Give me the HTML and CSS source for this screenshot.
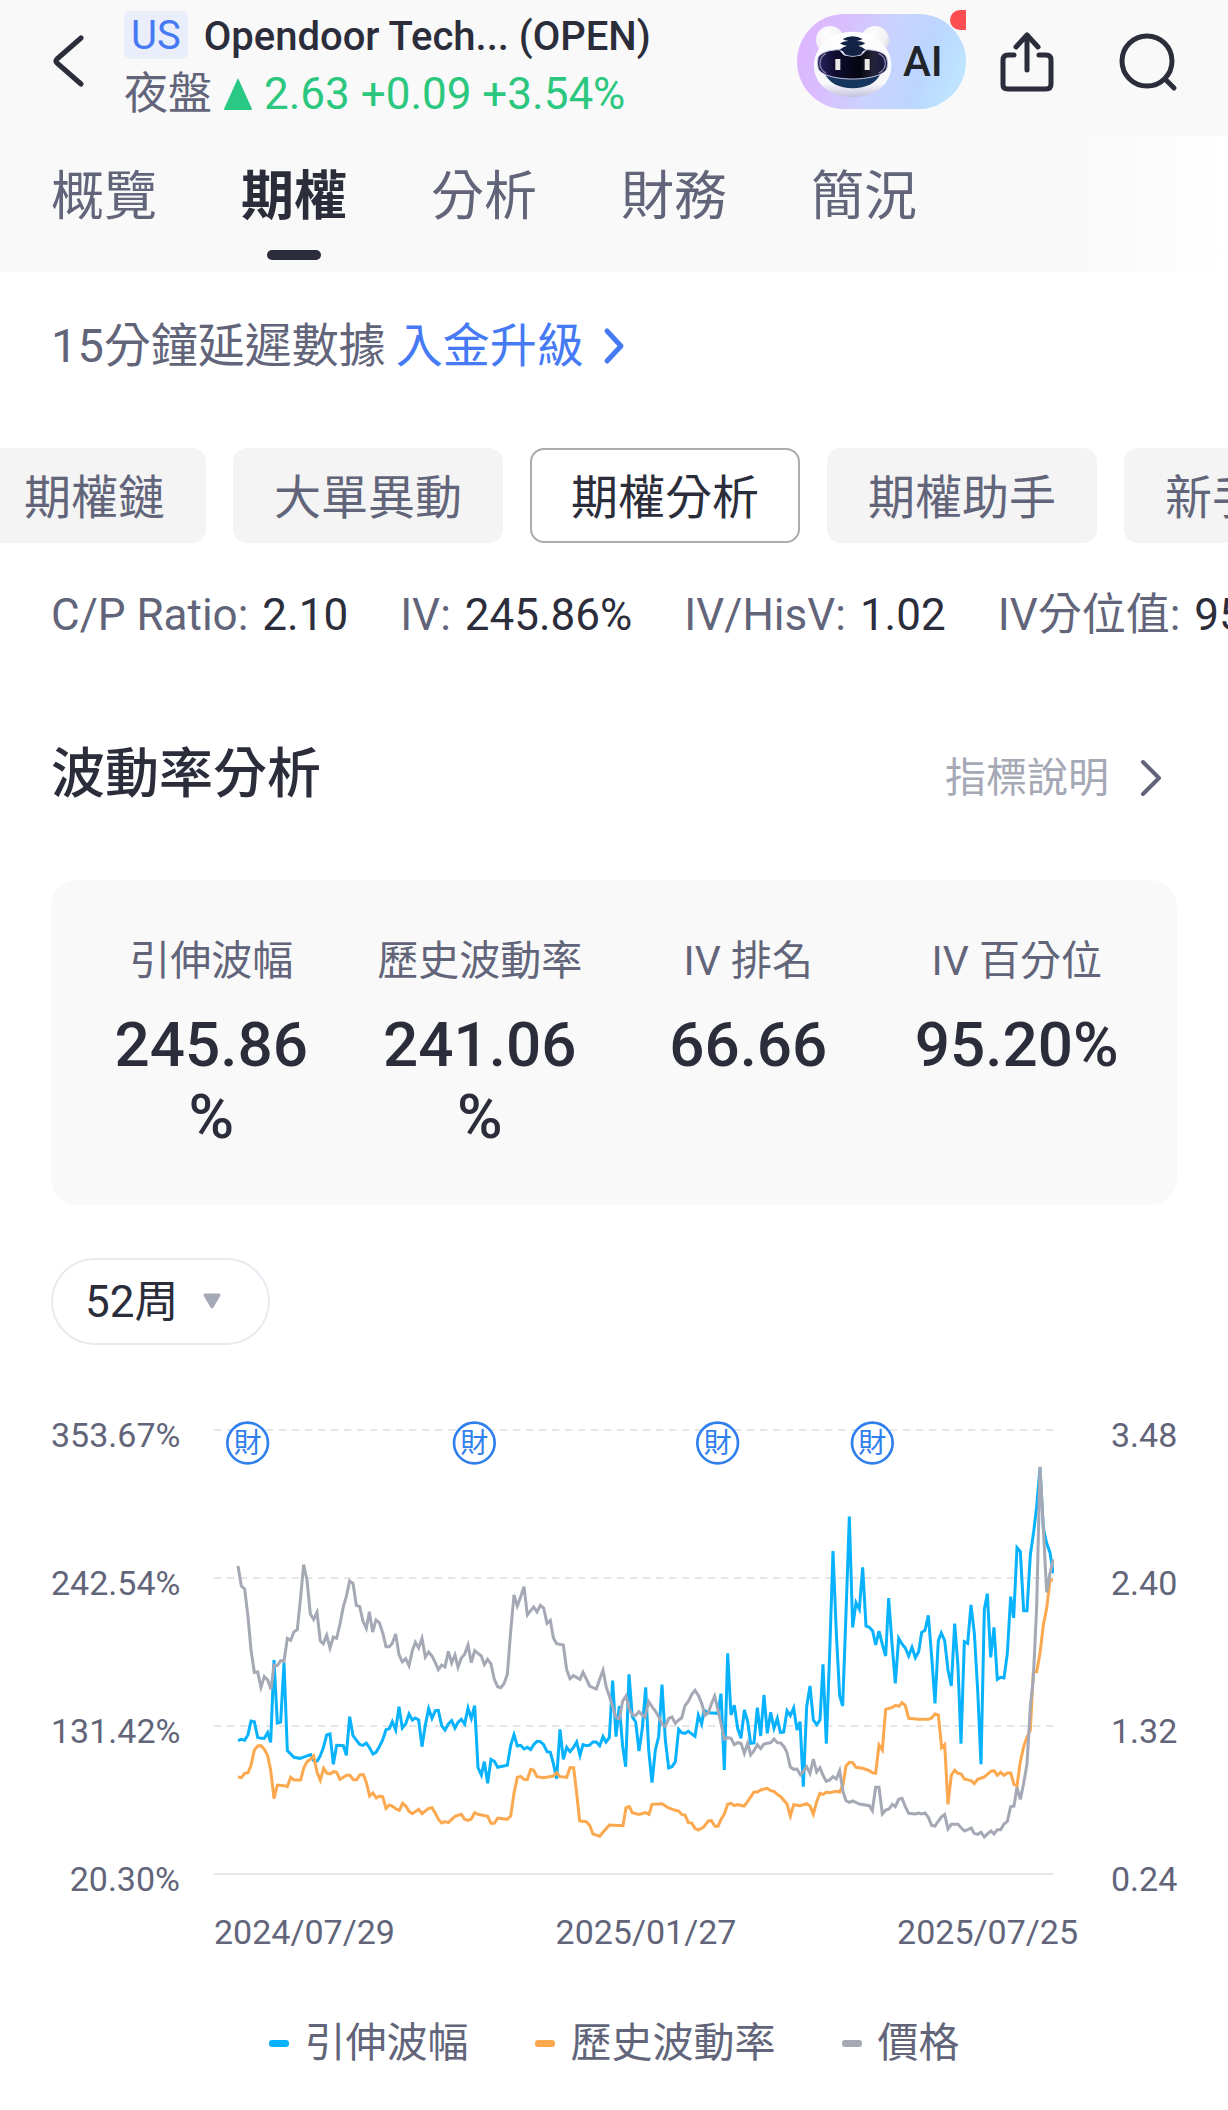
FILE: index.html
```html
<!DOCTYPE html>
<html lang="zh-Hant">
<head>
<meta charset="utf-8">
<meta name="viewport" content="width=device-width, initial-scale=1">
<title>Opendoor Tech (OPEN) 期權分析</title>
<link rel="stylesheet" href="styles.css">
</head>
<body>
<header class="top">
  <div class="bar">
    <button class="icon-btn back" type="button" aria-label="返回">
      <svg width="32" height="52" viewBox="0 0 32 52"><path d="M29 3 5 24Q3 26 5 28L29 49"/></svg>
    </button>
    <div class="quote">
      <div class="quote-name"><span class="market">US</span><h1 class="name">Opendoor Tech... (OPEN)</h1></div>
      <div class="quote-price"><span>夜盤</span>
        <svg class="up" width="28" height="33" viewBox="0 0 28 33" aria-hidden="true"><path d="M14 0 28 31Q28 32 27 32H1Q0 32 0 31Z"/></svg>
        <span class="gain">2.63 +0.09 +3.54%</span></div>
    </div>
    <div class="actions">
      <button class="ai" type="button">
        <svg width="84" height="75" viewBox="148 75 252 225" aria-hidden="true">
          <defs>
            <radialGradient id="ear" cx=".4" cy=".3" r=".8"><stop offset="0" stop-color="#fff"/><stop offset=".6" stop-color="#f3f2f4"/><stop offset="1" stop-color="#d5d3dc"/></radialGradient>
            <linearGradient id="head" x1="0" y1="0" x2="0" y2="1"><stop offset="0" stop-color="#fff"/><stop offset=".8" stop-color="#f7f6fb"/><stop offset="1" stop-color="#c3c2dc"/></linearGradient>
            <linearGradient id="visor" x1="0" y1="0" x2="1" y2="0"><stop offset="0" stop-color="#2a2461"/><stop offset=".25" stop-color="#0f0c30"/><stop offset=".6" stop-color="#050510"/><stop offset=".8" stop-color="#26243a"/><stop offset="1" stop-color="#15123e"/></linearGradient>
          </defs>
          <circle cx="208" cy="123" r="42" fill="url(#ear)"/>
          <circle cx="343" cy="123" r="42" fill="url(#ear)"/>
          <path d="M276 98C345 98 392 145 392 200C392 258 338 294 276 294C212 294 160 258 160 200C160 145 207 98 276 98Z" fill="url(#head)"/>
          <path d="M192 222H360C350 252 315 268 276 268C237 268 203 252 192 222Z" fill="#17365d"/>
          <path d="M172 176C180 160 205 153 236 152L250 168Q276 176 302 168L318 152C348 153 372 160 378 176Q384 195 378 210C368 230 320 240 276 240C230 240 183 230 173 210Q168 195 172 176Z" fill="url(#visor)" stroke="#c8c4e4" stroke-width="3"/>
          <path d="M196 164Q178 172 178 194Q178 212 196 222M354 164Q374 172 374 194Q374 212 354 222" fill="none" stroke="#8583aa" stroke-width="4"/>
          <path d="M276 112Q292 113 306 120Q298 125 288 126Q302 126 314 133Q304 141 292 140Q304 142 316 153Q304 155 302 166Q276 176 252 166Q250 155 236 153Q248 142 260 140Q248 141 238 133Q250 126 264 126Q252 125 246 120Q260 113 276 112Z" fill="#122244"/>
          <path d="M224 180H239V213H224ZM312 180H327V213H312Z" fill="#e9e9e6"/>
        </svg>
        <span>AI</span>
        <i class="dot"></i>
      </button>
      <button class="icon-btn share" type="button" aria-label="分享">
        <svg width="56" height="64" viewBox="0 0 56 64"><path d="M15 25H9Q4 25 4 30V55Q4 59 9 59H47Q52 59 52 54V30Q52 25 47 25H40M28 40V6M17 17 28 5 39 17"/></svg>
      </button>
      <button class="icon-btn search" type="button" aria-label="搜尋">
        <svg width="60" height="60" viewBox="0 0 60 60"><circle cx="28" cy="29" r="25"/><path d="M46 47 55 56"/></svg>
      </button>
    </div>
  </div>
  <nav class="tabs">
    <a class="tab" href="#overview">概覽</a>
    <a class="tab is-on" href="#options" aria-current="page">期權</a>
    <a class="tab" href="#analysis">分析</a>
    <a class="tab" href="#finance">財務</a>
    <a class="tab" href="#profile">簡況</a>
  </nav>
</header>

<main>
  <p class="notice">15分鐘延遲數據 <a href="#upgrade">入金升級<svg width="24" height="38" viewBox="0 0 24 38" aria-hidden="true"><path d="M4 4 18 19 4 34"/></svg></a></p>

  <div class="chips">
    <button class="chip" type="button">期權鏈</button>
    <button class="chip" type="button">大單異動</button>
    <button class="chip is-on" type="button">期權分析</button>
    <button class="chip" type="button">期權助手</button>
    <button class="chip" type="button">新手教學</button>
  </div>

  <dl class="ratios">
    <div><dt>C/P Ratio:</dt><dd>2.10</dd></div>
    <div><dt>IV:</dt><dd>245.86%</dd></div>
    <div><dt>IV/HisV:</dt><dd>1.02</dd></div>
    <div><dt>IV分位值:</dt><dd>95.20%</dd></div>
  </dl>

  <section class="section">
    <div class="section-head">
      <h2>波動率分析</h2>
      <a class="help" href="#help">指標說明<svg width="24" height="42" viewBox="0 0 24 42" aria-hidden="true"><path d="M4 5 20 21 4 37"/></svg></a>
    </div>

    <dl class="card">
      <div><dt>引伸波幅</dt><dd>245.86%</dd></div>
      <div><dt>歷史波動率</dt><dd>241.06%</dd></div>
      <div><dt>IV 排名</dt><dd>66.66</dd></div>
      <div><dt>IV 百分位</dt><dd>95.20%</dd></div>
    </dl>

    <div class="period">
      <select aria-label="週期"><option>52周</option><option>26周</option></select>
      <svg width="20" height="17" viewBox="0 0 20 17" aria-hidden="true"><path d="M3 2H17L10 14Z"/></svg>
    </div>

    <figure class="chart">
      <div class="axis axis-left"><span>353.67%</span><span>242.54%</span><span>131.42%</span><span>20.30%</span></div>
      <svg class="plot" viewBox="42 45 2520 1452" role="img" aria-label="引伸波幅、歷史波動率與價格走勢">
        <path class="grid-dash" d="M42 90H2559M42 534H2559M42 978H2559"/>
        <path class="grid-base" d="M42 1422H2559"/>
        <polyline class="line iv" points="114,1022 124,1018 134,1021 144,1004 153,963 163,965 173,1012 183,1015 193,1015 203,998 212,1027 222,780 232,969 242,966 252,788 262,1052 282,1072 300,1075 332,1064 341,1082 352,1083 361,1067 370,1043 380,1005 390,1002 400,1093 410,1036 430,1037 439,1066 449,950 459,1007 479,1033 489,1036 499,1029 509,1044 519,1062 528,1057 538,1040 548,1020 558,989 568,986 577,965 587,990 597,920 607,984 617,972 627,942 637,960 646,954 656,960 666,1040 676,975 686,926 696,955 706,932 715,931 725,977 735,990 745,972 755,962 765,984 774,967 784,958 794,972 804,924 814,955 824,917 834,1103 844,1125 853,1085 863,1150 873,1078 883,1084 893,1102 922,1096 932,1037 942,1004 952,1038 962,1036 972,1047 982,1042 992,1049 1001,1034 1011,1024 1021,1025 1031,1034 1041,1055 1051,1057 1060,1090 1070,1136 1080,988 1090,1078 1100,1042 1110,1055 1120,1043 1130,1026 1140,1066 1149,1034 1159,1037 1169,1035 1179,1026 1189,1026 1199,1037 1209,1010 1218,1026 1228,1013 1238,842 1248,1010 1258,918 1268,1040 1277,1100 1287,823 1297,950 1307,966 1317,1053 1327,985 1337,862 1346,1050 1356,1148 1366,1050 1376,1010 1386,854 1396,1020 1406,1104 1416,1100 1426,1085 1436,988 1445,998 1455,1000 1465,994 1485,1009 1495,946 1505,972 1512,930 1525,938 1554,940 1563,881 1573,1110 1583,760 1593,945 1603,916 1613,985 1623,1015 1633,930 1643,965 1652,1030 1662,1029 1672,923 1682,1008 1692,885 1702,1000 1712,937 1722,985 1732,955 1741,997 1751,996 1761,932 1771,947 1781,924 1791,990 1800,965 1810,1160 1820,920 1830,858 1840,960 1850,974 1860,960 1869,793 1879,1031 1889,760 1899,453 1909,700 1919,887 1928,918 1938,640 1948,350 1958,682 1968,608 1978,628 1988,502 1998,678 2008,682 2018,693 2027,735 2037,693 2047,733 2057,768 2066,594 2076,730 2086,850 2096,715 2106,732 2116,744 2126,768 2136,742 2146,773 2156,755 2165,697 2175,691 2185,646 2195,770 2205,910 2215,722 2224,699 2234,722 2244,810 2254,858 2264,671 2274,800 2283,1031 2293,725 2303,730 2313,615 2323,700 2333,870 2343,1093 2353,628 2362,581 2372,772 2382,682 2392,838 2402,832 2412,834 2422,760 2432,590 2441,654 2451,443 2461,455 2471,632 2481,632 2491,465 2501,395 2510,320 2520,205 2530,385 2540,430 2550,458 2560,520"/>
        <polyline class="line hv" points="114,1131 124,1133 134,1120 144,1118 153,1097 163,1050 173,1038 183,1037 193,1048 203,1067 212,1110 222,1196 232,1155 252,1157 262,1160 272,1132 282,1140 302,1140 311,1105 321,1085 331,1078 341,1068 351,1116 361,1141 371,1105 381,1120 391,1122 400,1115 410,1117 420,1138 440,1126 450,1126 460,1139 470,1139 480,1124 490,1124 499,1147 509,1188 519,1179 529,1194 539,1188 548,1190 558,1225 568,1215 578,1219 588,1227 598,1231 608,1210 618,1219 627,1234 637,1241 656,1228 666,1241 686,1225 696,1223 706,1240 716,1259 725,1269 735,1265 745,1268 765,1249 784,1243 794,1258 804,1261 814,1257 824,1238 834,1243 863,1249 873,1270 883,1270 893,1254 922,1258 932,1248 942,1180 952,1132 962,1129 972,1138 982,1139 992,1108 1001,1111 1011,1130 1031,1133 1060,1128 1070,1118 1080,1130 1100,1132 1110,1103 1121,1103 1130,1180 1139,1263 1159,1265 1169,1276 1179,1302 1199,1309 1209,1297 1228,1275 1269,1277 1278,1223 1288,1220 1297,1238 1317,1243 1337,1238 1347,1243 1356,1213 1386,1211 1406,1224 1426,1231 1436,1233 1446,1244 1455,1245 1465,1268 1475,1269 1485,1285 1495,1290 1510,1282 1525,1263 1534,1262 1545,1279 1554,1279 1563,1258 1573,1242 1583,1213 1593,1210 1603,1217 1613,1214 1633,1218 1643,1204 1662,1176 1672,1176 1682,1170 1702,1165 1712,1172 1722,1174 1732,1183 1742,1190 1761,1212 1771,1248 1781,1214 1801,1217 1820,1211 1830,1218 1840,1243 1850,1205 1860,1180 1870,1183 1879,1176 1889,1178 1909,1174 1919,1176 1929,1155 1938,1098 1948,1087 1958,1088 1968,1102 1988,1105 2008,1112 2017,1118 2027,1120 2037,1035 2047,1050 2057,928 2077,922 2087,916 2097,919 2106,908 2116,917 2126,955 2156,958 2185,958 2195,954 2205,942 2215,945 2225,1043 2234,1034 2244,1213 2254,1125 2264,1111 2274,1120 2284,1122 2293,1137 2313,1142 2323,1151 2333,1138 2353,1131 2372,1114 2382,1112 2392,1126 2402,1117 2412,1126 2422,1119 2432,1119 2442,1153 2451,1157 2461,1085 2471,1040 2481,1012 2491,990 2500,815 2510,815 2520,760 2530,675 2540,625 2550,540 2559,540"/>
        <polyline class="line price" points="114,498 124,558 134,567 144,650 153,750 163,817 173,816 183,862 193,830 203,840 213,868 222,795 232,797 242,782 252,784 262,715 272,721 282,695 292,689 302,590 311,494 321,540 331,642 341,658 351,637 361,723 370,731 380,706 390,744 400,711 410,715 420,672 430,620 439,589 449,543 459,550 469,616 479,620 489,664 499,685 508,635 518,696 528,660 538,668 548,698 558,740 568,740 577,730 587,702 597,764 607,786 617,776 627,797 637,752 646,727 656,744 666,715 676,771 686,756 696,768 706,788 715,809 725,795 735,801 745,754 755,789 765,765 774,802 784,774 794,763 804,735 814,788 824,752 834,760 844,768 853,794 863,778 873,792 883,838 893,860 902,863 912,851 922,823 932,695 942,585 952,618 962,590 972,560 982,645 992,632 1001,621 1011,636 1021,616 1031,624 1041,670 1051,661 1060,713 1070,731 1090,735 1100,809 1110,836 1120,827 1140,838 1149,817 1159,837 1169,858 1189,867 1199,838 1209,811 1219,862 1228,888 1238,920 1248,953 1258,957 1268,903 1278,888 1288,928 1298,945 1307,946 1317,935 1327,945 1335,951 1346,905 1356,920 1366,933 1376,950 1386,973 1396,979 1406,955 1416,951 1426,970 1436,960 1445,954 1455,917 1465,904 1475,884 1485,871 1495,886 1505,910 1515,946 1525,938 1534,912 1544,888 1554,930 1564,975 1573,1018 1583,1013 1593,1015 1603,1034 1613,1028 1623,1030 1633,1060 1643,1030 1652,1065 1662,1052 1672,1034 1682,1046 1692,1032 1702,1030 1712,1028 1722,1017 1732,1028 1742,1029 1752,1040 1761,1058 1771,1101 1781,1108 1791,1107 1801,1124 1811,1113 1820,1100 1830,1120 1840,1077 1850,1116 1860,1103 1870,1128 1879,1144 1889,1140 1899,1130 1909,1137 1919,1112 1929,1175 1938,1202 1948,1207 1958,1203 1978,1212 2008,1217 2017,1232 2027,1162 2037,1162 2047,1242 2057,1230 2067,1227 2077,1213 2086,1220 2096,1198 2106,1195 2116,1220 2126,1240 2146,1242 2156,1239 2165,1242 2175,1239 2185,1252 2195,1276 2205,1278 2215,1263 2224,1251 2234,1243 2244,1287 2254,1273 2274,1273 2284,1284 2294,1293 2314,1284 2322,1300 2333,1303 2343,1297 2353,1311 2363,1301 2373,1293 2382,1302 2392,1289 2402,1289 2412,1272 2422,1264 2432,1220 2442,1218 2451,1162 2461,1198 2471,1150 2481,1092 2491,920 2500,835 2510,620 2520,200 2530,385 2540,577 2550,520 2560,478"/>
        <g class="marks">
          <circle cx="143" cy="129" r="61"/><text x="143" y="159">財</text>
          <circle cx="823" cy="129" r="61"/><text x="823" y="159">財</text>
          <circle cx="1553" cy="129" r="61"/><text x="1553" y="159">財</text>
          <circle cx="2017" cy="129" r="61"/><text x="2017" y="159">財</text>
        </g>
      </svg>
      <div class="axis axis-right"><span>3.48</span><span>2.40</span><span>1.32</span><span>0.24</span></div>
      <div class="dates"><span>2024/07/29</span><span>2025/01/27</span><span>2025/07/25</span></div>
    </figure>

    <ul class="legend">
      <li class="key-iv">引伸波幅</li>
      <li class="key-hv">歷史波動率</li>
      <li class="key-price">價格</li>
    </ul>
  </section>
</main>
</body>
</html>
```
FILE: styles.css
```css
:root {
  --ink: #2b2d3b;
  --mid: #62657a;
  --light: #a5a8b5;
  --blue: #467af5;
  --green: #2bc77f;
  --iv: #08b2fc;
  --hv: #fba84f;
  --side: 51px;
}

* { box-sizing: border-box; }

body {
  margin: 0;
  background: #fff;
  color: var(--ink);
  font-family: Roboto, "Noto Sans CJK TC", sans-serif;
}

button, select {
  margin: 0;
  padding: 0;
  border: 0;
  background: none;
  color: inherit;
  font: inherit;
}

a { color: inherit; text-decoration: none; }
h1, h2, p, dl, dd, figure, ul { margin: 0; padding: 0; }
svg { display: block; flex: none; }

/* Header */
.top { background: #f9f9f9; }

.bar {
  display: flex;
  align-items: flex-start;
  height: 136px;
  padding: 11px 49px 0 52px;
}

.icon-btn { display: flex; }
.icon-btn svg {
  fill: none;
  stroke: var(--ink);
  stroke-width: 5;
  stroke-linecap: round;
  stroke-linejoin: round;
}

.back { margin: 24px 40px 0 0; }

.quote { flex: 1; min-width: 0; }
.quote-name { display: flex; align-items: center; gap: 16px; height: 48px; }

.market {
  height: 48px;
  padding: 0 7px;
  border-radius: 7px;
  background: #e9eefa;
  color: var(--blue);
  font-size: 40px;
  line-height: 49px;
}

.name {
  overflow: hidden;
  padding-top: 4px;
  font-size: 40px;
  font-weight: 500;
  line-height: 52px;
  white-space: nowrap;
}

.quote-price {
  display: flex;
  align-items: center;
  gap: 12px;
  margin-top: 10px;
  color: var(--mid);
  font-size: 44px;
  line-height: 50px;
  white-space: nowrap;
}

.up { fill: #29c983; }
.gain { color: var(--green); }

.actions { display: flex; align-items: center; height: 101px; }

.ai {
  position: relative;
  display: flex;
  align-items: center;
  gap: 9px;
  width: 169px;
  height: 95px;
  padding-left: 13px;
  border-radius: 48px;
  background: linear-gradient(110deg, #deb3ff 0%, #d9bdfe 25%, #c9d3ff 50%, #bcd6ff 72%, #c0eaff 100%);
  color: #22242c;
  font-size: 42px;
  font-weight: 500;
}

.dot {
  position: absolute;
  top: -4px;
  right: 0;
  width: 16px;
  height: 20px;
  border-radius: 10px 0 0 10px;
  background: #fb4d50;
}

.share { margin-left: 33px; }
.search { margin-left: 64px; }

.tabs {
  display: flex;
  gap: 84px;
  height: 136px;
  padding: 31px var(--side) 0;
  background: linear-gradient(90deg, #fff0, #fff) right / 155px 100% no-repeat;
}

.tab {
  display: flex;
  flex-direction: column;
  align-items: center;
  gap: 23px;
  color: var(--mid);
  font-size: 53px;
  line-height: 60px;
}

.tab.is-on { color: var(--ink); font-weight: 700; }
.tab.is-on::after {
  content: "";
  width: 54px;
  height: 10px;
  border-radius: 5px;
  background: var(--ink);
}

/* Notice */
.notice {
  display: flex;
  gap: 10px;
  padding: 44px var(--side) 0;
  color: var(--mid);
  font-size: 47px;
  line-height: 60px;
}

.notice a { display: flex; align-items: center; gap: 19px; color: var(--blue); }
.notice svg, .help svg {
  fill: none;
  stroke: currentColor;
  stroke-width: 5;
  stroke-linecap: round;
  stroke-linejoin: round;
}

/* Sub navigation, scrolled a little to the left */
.chips {
  display: flex;
  gap: 27px;
  margin: 72px 0 0 -17px;
  overflow: hidden;
}

.chip {
  flex: none;
  height: 95px;
  padding: 0 41px 4px;
  border-radius: 14px;
  background: #f4f4f4;
  color: var(--mid);
  font-size: 47px;
}

.chip.is-on {
  padding: 0 39px 4px;
  border: 2px solid #acacac;
  background: #fff;
  color: var(--ink);
}

.ratios {
  display: flex;
  gap: 52px;
  padding: 46px 0 0 var(--side);
  overflow: hidden;
  font-size: 44px;
  line-height: 52px;
  white-space: nowrap;
}

.ratios div { display: flex; gap: 14px; }
.ratios dt { color: var(--mid); }

/* Volatility section */
.section { padding: 102px var(--side) 42px; }

.section-head {
  display: flex;
  align-items: center;
  justify-content: space-between;
  padding-right: 14px;
}

h2 { font-size: 54px; font-weight: 500; line-height: 64px; }

.help {
  display: flex;
  align-items: center;
  gap: 30px;
  padding-top: 6px;
  color: var(--light);
  font-size: 41px;
  line-height: 48px;
}

.help svg { stroke: var(--mid); stroke-width: 4; }

.card {
  display: grid;
  grid-template-columns: repeat(4, 1fr);
  margin-top: 73px;
  padding: 57px 26px 52px;
  border-radius: 26px;
  background: #f9f9f9;
  text-align: center;
}

.card div { padding: 0 24px; }
.card dt { color: var(--mid); font-size: 41px; line-height: 48px; }
.card dd {
  margin-top: 24px;
  font-size: 62px;
  font-weight: 500;
  line-height: 72px;
  overflow-wrap: anywhere;
}

.period {
  display: grid;
  align-items: center;
  width: 219px;
  margin-top: 53px;
}

.period select, .period svg { grid-area: 1 / 1; }

.period select {
  height: 87px;
  padding: 0 32px;
  border: 2px solid #e9eaf0;
  border-radius: 44px;
  appearance: none;
  font-size: 44px;
}

.period svg {
  justify-self: end;
  margin-right: 48px;
  fill: var(--light);
  stroke: var(--light);
  stroke-width: 3;
  stroke-linejoin: round;
  pointer-events: none;
}

/* Chart */
.chart {
  display: grid;
  grid-template-columns: 129px 1fr 66px;
  margin-top: 70px;
  color: var(--mid);
  font-size: 34px;
  line-height: 40px;
}

.axis { display: flex; flex-direction: column; justify-content: space-between; text-align: right; }
.plot { width: calc(100% - 91px); margin-left: 34px; }

.dates {
  display: flex;
  grid-column: 2 / 3;
  justify-content: space-between;
  margin: 13px 33px 0 34px;
}

.grid-dash, .grid-base { fill: none; stroke: #e6e6e6; stroke-width: 6; }
.grid-dash { stroke-dasharray: 22 17; }

.line { fill: none; stroke-width: 9; }
.iv { stroke: var(--iv); }
.hv { stroke: var(--hv); }
.price { stroke: var(--light); }

.marks circle { fill: #fff; stroke: #2f80ed; stroke-width: 8; }
.marks text { fill: #2f80ed; font-size: 84px; text-anchor: middle; }

.legend {
  display: flex;
  justify-content: center;
  gap: 66px;
  margin-top: 67px;
  color: var(--mid);
  font-size: 41px;
  line-height: 48px;
  list-style: none;
}

.legend li { display: flex; align-items: center; gap: 16px; }
.legend li::before {
  content: "";
  width: 20px;
  height: 7px;
  border-radius: 3px;
  background: var(--light);
}
.legend .key-iv::before { background: var(--iv); }
.legend .key-hv::before { background: var(--hv); }
```
